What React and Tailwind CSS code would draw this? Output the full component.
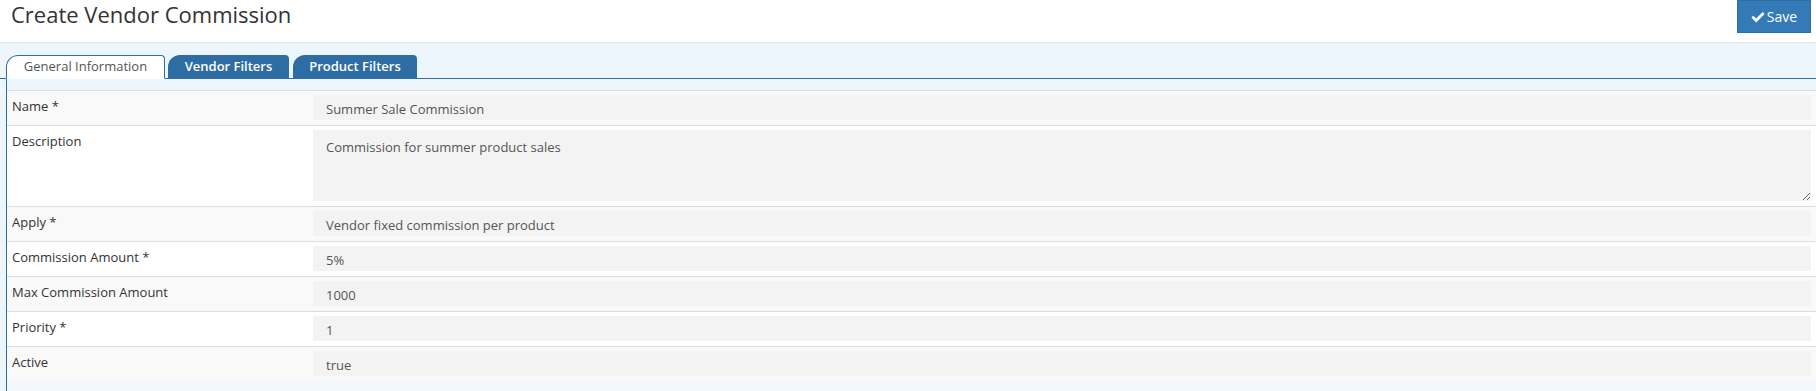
// Create Vendor Commission form: header, tab strip, striped field rows.

const FIELDS = [
  { label: 'Name *', value: 'Summer Sale Commission' },
  { label: 'Description', value: 'Commission for summer product sales', multiline: true },
  { label: 'Apply *', value: 'Vendor fixed commission per product' },
  { label: 'Commission Amount *', value: '5%' },
  { label: 'Max Commission Amount', value: '1000' },
  { label: 'Priority *', value: '1' },
  { label: 'Active', value: 'true' },
];

const FONT = "font-['Open_Sans','Noto_Sans',sans-serif]";

export default function App() {
  return (
    <div className={`w-[1816px] h-[391px] overflow-hidden bg-[#eef6fd] ${FONT}`}>
      <header className="h-[43px] bg-white border-b border-[#e3e3e3] flex justify-between items-start pl-[11px] pr-[5px]">
        <h1 className="text-[22px] leading-[28px] text-[#333]">Create Vendor Commission</h1>
        <button className="h-[33px] w-[74px] bg-[#337ab7] border border-[#2e6da4] text-white text-[14px] flex items-center justify-center gap-[2px]">
          <CheckIcon />
          Save
        </button>
      </header>

      <div className="pt-[12px]">
        <div className="flex items-end pl-[6px] border-b border-[#2e6da4] h-[24px]">
          <Tab active className="w-[159px]">General Information</Tab>
          <Tab className="w-[121px] ml-[3px]">Vendor Filters</Tab>
          <Tab className="w-[124px] ml-[4px]">Product Filters</Tab>
        </div>

        <div className="ml-[6px] border-l border-[#2e6da4] pt-[11px]">
          {FIELDS.map((f, i) => (
            <Row key={f.label} field={f} striped={i % 2 === 0} />
          ))}
          <div className="h-[20px] bg-[#f3f8fe]" />
        </div>
      </div>
    </div>
  );
}

function Tab({ active, className = '', children }) {
  if (active) {
    return (
      <div className={`h-[24px] -mb-px bg-white border border-[#2e6da4] border-b-white rounded-tl-[12px] rounded-tr-[4px] flex items-center justify-center text-[13px] text-[#555] ${className}`}>
        {children}
      </div>
    );
  }
  return (
    <div className={`h-[23px] bg-[#2e6da4] rounded-tl-[12px] rounded-tr-[4px] flex items-center justify-center text-[13px] font-semibold text-white ${className}`}>
      {children}
    </div>
  );
}

function Row({ field, striped }) {
  return (
    <div className={`flex border-t border-[#dddddd] pt-[4px] pb-[5px] ${striped ? 'bg-[#f9f9f9]' : 'bg-white'}`}>
      <div className="w-[306px] shrink-0 pl-[5px] pt-[2px] text-[13px] leading-[18px] text-[#333]">{field.label}</div>
      <div className="flex-1 mr-[5px]">
        {field.multiline ? (
          <textarea
            readOnly
            value={field.value}
            className="block w-full h-[71px] bg-[#f3f3f3] px-[13px] pt-[8px] text-[13px] leading-[18px] text-[#555] outline-none"
          />
        ) : (
          <div className="h-[25px] bg-[#f3f3f3] px-[13px] pt-[5px] text-[13px] leading-[18px] text-[#555]">{field.value}</div>
        )}
      </div>
    </div>
  );
}

function CheckIcon() {
  return (
    <svg width="14" height="12" viewBox="0 0 14 12" fill="white" aria-hidden="true">
      <path d="M5.2 11.4 0.4 6.6 2.3 4.7 5.2 7.6 11.7 1.1 13.6 3z" />
    </svg>
  );
}
